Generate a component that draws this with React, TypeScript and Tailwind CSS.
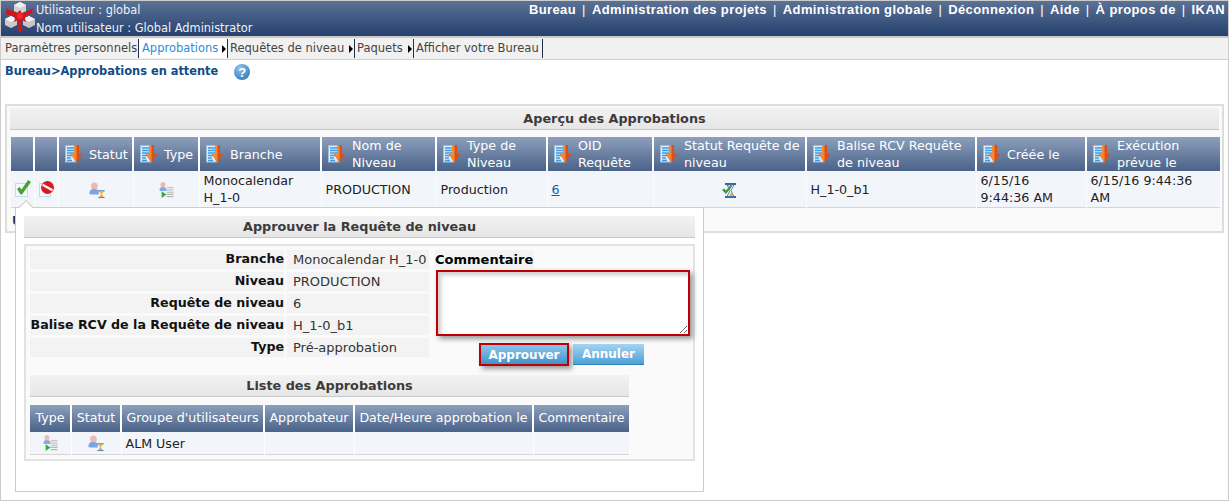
const sans = "font-['DejaVu_Sans',sans-serif]";

function Logo() {
  return (
    <svg width="30" height="33" viewBox="0 0 30 33" className="shrink-0">
      {/* cubes */}
      <path d="M15 1l6 3v6l-6 3-6-3V4z" fill="#d4d0d0" />
      <path d="M15 1l6 3-6 3-6-3z" fill="#f2f0f0" />
      <path d="M6 15l6 3v6l-6 3-6-3v-6z" fill="#cfcaca" />
      <path d="M6 15l6 3-6 3-6-3z" fill="#f4f2f2" />
      <path d="M24 15l6 3v6l-6 3-6-3v-6z" fill="#c8c4c4" />
      <path d="M24 15l6 3-6 3-6-3z" fill="#efeded" />
      {/* star */}
      <path d="M15 9l2 3.500L29 7l-2 3 1 2-8 3 0 3 1 3-4-2-1 8 2 0-3 5-3-5 2 0-1-8-4 2 1-3-1-3-9-2 2-3-1-3 11 5z" fill="#d3141b" />
      <circle cx="15" cy="15" r="3" fill="#f02a2a" />
    </svg>
  );
}

function SortIcon() {
  return (
    <svg width="17" height="18" viewBox="0 0 17 18" className="shrink-0">
      <rect x="0.500" y="0.500" width="10" height="16.500" fill="#dcecf9" stroke="#a5bdd2" />
      <path d="M2 3h7M2 5.500h7M2 8h7M2 10.500h5M2 13h4M2 15.500h5" stroke="#3f9ae3" strokeWidth="1.300" />
      <path d="M9 0h5v9h3l-5.500 9L6 9h3z" fill="#dc4f18" />
      <path d="M9 0h2.500v18L6 9h3z" fill="#f08a38" />
    </svg>
  );
}

function UserHourglass() {
  return (
    <svg width="17" height="16" viewBox="0 0 18 18">
      <ellipse cx="5.500" cy="4.500" rx="3.800" ry="4" fill="#efb9ae" />
      <path d="M0 13c0-3.500 1.500-5 5.500-5 3.500 0 5 1.200 5 3v3H1.500C.5 14 0 13.800 0 13z" fill="#7ba4e4" />
      <path d="M10 10h7M10 17.500h7" stroke="#4e86ba" strokeWidth="1.300" />
      <path d="M11 10.500h5l-2 3 2 3.500h-5l2-3.500z" fill="#f5b02e" />
    </svg>
  );
}

function UserList() {
  return (
    <svg width="15" height="16" viewBox="0 0 16 18">
      <ellipse cx="4" cy="3" rx="2.800" ry="3" fill="#efb9ae" />
      <path d="M0 9c0-2.500 1.500-3.500 4-3.500S8 6.500 8 9v1H1z" fill="#86abe2" />
      <path d="M8 6.500h8M8 9h8M8 11.500h8M8 14h8M8 16.500h8" stroke="#b5b9b9" strokeWidth="1.300" />
      <path d="M2.500 10.500l5.500 3.500-5.500 4z" fill="#2fae3a" />
    </svg>
  );
}

function CheckDoc() {
  return (
    <svg width="16" height="17" viewBox="0 0 16 17">
      <rect x="0.500" y="3.500" width="12" height="13" fill="#f5fafe" stroke="#c3dcec" />
      <path d="M2 9l2.500-2L6.500 9.500 13 0l3 2L7 14.500H5.500z" fill="#4ba233" />
    </svg>
  );
}

function RejectDoc() {
  return (
    <svg width="16" height="16" viewBox="0 0 16 16">
      <rect x="0.500" y="2.500" width="11" height="13" fill="#f5fafe" stroke="#c3dcec" />
      <circle cx="8.500" cy="6.500" r="6.500" fill="#d51b23" />
      <path d="M3.500 3.800l10 5.400" stroke="#fff" strokeWidth="2.200" />
    </svg>
  );
}

function RequestStatus() {
  return (
    <svg width="15" height="15" viewBox="0 0 15 15">
      <path d="M3 1h11M3 14h11" stroke="#2f6aa8" strokeWidth="1.800" />
      <path d="M5 2h7l-3 5.500 3 6H5l3-6z" fill="#eef3f8" stroke="#3b6ea5" strokeWidth="0.800" />
      <path d="M7 13l2.500-4.500 2 4.500z" fill="#f0a93a" />
      <path d="M0 7l2-1.500 2 2L8.500 2 10 3.500 4 11z" fill="#3c9a3c" />
    </svg>
  );
}

function HelpIcon() {
  return (
    <div className="flex h-4 w-4 items-center justify-center rounded-full bg-[radial-gradient(circle_at_35%_25%,#8cc4ee,#1d6db5)] font-['Liberation_Sans',sans-serif] text-[13px] leading-none font-bold text-white">
      ?
    </div>
  );
}

function TitleBar({ children, className }: { children: string; className: string }) {
  return (
    <div className={`flex items-center justify-center border-b border-[#c8c8c8] bg-gradient-to-b from-[#f2f2f2] to-[#e6e6e6] text-[12.800px] font-bold text-[#3b3b3b] ${className}`}>
      {children}
    </div>
  );
}

const navItems = ["Bureau", "Administration des projets", "Administration globale", "Déconnexion", "Aide", "À propos de"];

const tabs = [
  { label: "Paramètres personnels", w: "w-[138px] pl-[4px]" },
  { label: "Approbations", w: "w-[89px] pl-[3px]", active: true, arrow: true },
  { label: "Requêtes de niveau", w: "w-[127px] pl-[2px]", arrow: true },
  { label: "Paquets", w: "w-[59px] pl-[2px]", arrow: true },
  { label: "Afficher votre Bureau", w: "w-[129px] pl-[2px]" },
];

const mainCols: { w: string; label?: string }[] = [
  { w: "w-[23px]" },
  { w: "w-[24px]" },
  { w: "w-[75px]", label: "Statut" },
  { w: "w-[66px]", label: "Type" },
  { w: "w-[122px]", label: "Branche" },
  { w: "w-[115px]", label: "Nom de Niveau" },
  { w: "w-[111px]", label: "Type de Niveau" },
  { w: "w-[106px]", label: "OID Requête" },
  { w: "w-[153px]", label: "Statut Requête de niveau" },
  { w: "w-[170px]", label: "Balise RCV Requête de niveau" },
  { w: "w-[110px]", label: "Créée le" },
  { w: "w-[134px]", label: "Exécution prévue le" },
];

const formRows = [
  ["Branche", "Monocalendar H_1-0"],
  ["Niveau", "PRODUCTION"],
  ["Requête de niveau", "6"],
  ["Balise RCV de la Requête de niveau", "H_1-0_b1"],
  ["Type", "Pré-approbation"],
];

const listCols = [
  { w: "w-[41px]", label: "Type" },
  { w: "w-[50px]", label: "Statut" },
  { w: "w-[143px]", label: "Groupe d'utilisateurs" },
  { w: "w-[90px]", label: "Approbateur" },
  { w: "w-[179px]", label: "Date/Heure approbation le" },
  { w: "w-[96px]", label: "Commentaire" },
];

const headCell = "border-r-2 border-white bg-gradient-to-b from-[#8d9fbc] to-[#4a6389] text-white font-normal last:border-r-0";
const bodyCell = "border-r border-[#fafcfe] bg-[#f2f6fb] text-[#222]";

export default function App() {
  return (
    <div className={`flex h-[501px] w-[1229px] flex-col overflow-hidden border border-[#cccccc] bg-white text-[12px] ${sans}`}>
      {/* Top bar */}
      <header className="box-content flex h-[35px] shrink-0 justify-between border-b-2 border-[#c9c9c9] bg-gradient-to-b from-[#5b7295] to-[#26416f] pr-[3px] text-white">
        <div className="flex gap-[1px] pl-[4px]">
          <Logo />
          <div className="text-[11.400px] leading-[18px] text-[#eef2f7]">
            <div>Utilisateur : global</div>
            <div>Nom utilisateur : Global Administrator</div>
          </div>
        </div>
        <nav className="flex font-['Liberation_Sans',sans-serif] text-[13px] leading-[18px] font-bold tracking-[0.4px]">
          {navItems.map((item) => (
            <span key={item} className="flex">
              {item}
              <span className="mx-[6px] font-normal">|</span>
            </span>
          ))}
          <span>IKAN</span>
        </nav>
      </header>

      {/* Tabs */}
      <div className="box-content flex h-[21px] shrink-0 border-b border-[#cfcfcf] bg-[#f1f1f1] text-[11.500px] leading-[19px] text-[#444]">
        {tabs.map((t) => (
          <div
            key={t.label}
            className={`my-[1px] flex items-center justify-between border-r border-[#222f45] pr-[1px] ${t.w} ${t.active ? "bg-white text-[#2a8fd6]" : ""}`}
          >
            <span className="whitespace-nowrap">{t.label}</span>
            {t.arrow && <span className="h-0 w-0 border-y-[4px] border-l-[4px] border-y-transparent border-l-black" />}
          </div>
        ))}
      </div>

      {/* Breadcrumb */}
      <div className="flex h-[24px] shrink-0 items-center gap-[16px] pl-[4px] text-[11.400px] font-bold text-[#0f4d86]">
        <span>Bureau&gt;Approbations en attente</span>
        <HelpIcon />
      </div>

      {/* Overview panel */}
      <section className="relative mx-[4px] mt-[20px] h-[129px] shrink-0 border-2 border-[#dddddd] bg-[#fafafa] px-[3px] pt-[2px]">
        <TitleBar className="h-[22px]">Aperçu des Approbations</TitleBar>
        <table className="mt-[7px] ml-[1px] w-[1209px] table-fixed border-collapse text-[12.700px] leading-[17px]">
          <thead>
            <tr className="h-[34px]">
              {mainCols.map((c, i) => (
                <th key={i} className={`${headCell} ${c.w} p-0`}>
                  {c.label && (
                    <div className="flex items-center gap-[7px] pl-[6px] text-left">
                      <SortIcon />
                      <span>{c.label}</span>
                    </div>
                  )}
                </th>
              ))}
            </tr>
          </thead>
          <tbody>
            <tr className="h-[36px] border-b border-[#d5d5d5]">
              <td className={`${bodyCell} pl-[4px]`}><CheckDoc /></td>
              <td className={`${bodyCell} pl-[4px]`}><RejectDoc /></td>
              <td className={`${bodyCell} pt-[3px] pl-[3px]`}><div className="flex justify-center"><UserHourglass /></div></td>
              <td className={`${bodyCell} pt-[3px]`}><div className="flex justify-center"><UserList /></div></td>
              <td className={`${bodyCell} px-[4px]`}>Monocalendar H_1-0</td>
              <td className={`${bodyCell} px-[4px] pt-[2px]`}>PRODUCTION</td>
              <td className={`${bodyCell} px-[4px] pt-[2px]`}>Production</td>
              <td className={`${bodyCell} px-[4px] pt-[2px]`}><span className="text-[#0f5f9c] underline">6</span></td>
              <td className={`${bodyCell} pt-[3px]`}><div className="flex justify-center"><RequestStatus /></div></td>
              <td className={`${bodyCell} px-[4px] pt-[2px]`}>H_1-0_b1</td>
              <td className={`${bodyCell} px-[4px]`}>6/15/16<br />9:44:36 AM</td>
              <td className={`${bodyCell} px-[4px]`}>6/15/16 9:44:36<br />AM</td>
            </tr>
          </tbody>
        </table>
        <p className="mt-[5px] pl-[2px] text-[12px] leading-[17px] font-bold text-[#1a3560]">Utilisateur</p>

        {/* Approval popup */}
        <div className="absolute top-[101px] left-[8px] z-10 h-[285px] w-[689px] border border-[#cccccc] bg-white px-[8px] pt-[8px]">
          <span className="absolute -top-[6px] left-[5px] h-[10px] w-[10px] rotate-45 border-t border-l border-[#cccccc] bg-white" />
          <TitleBar className="h-[22px]">Approuver la Requête de niveau</TitleBar>
          <div className="mt-[6px] h-[217px] border-2 border-[#e2e2e2] bg-[#fafafa] px-[4px] pt-[4px]">
            <div className="flex h-[107px]">
              <div className="flex w-[399px] flex-col gap-[3px]">
                {formRows.map(([label, value]) => (
                  <div key={label} className="flex h-[19px] gap-[3px]">
                    <span className="flex w-[254px] items-center justify-end bg-[#f3f3f3] text-[12.650px] font-bold whitespace-nowrap text-[#111]">{label}</span>
                    <span className="flex w-[142px] items-center bg-[#f3f3f3] pl-[6px] text-[13px] whitespace-nowrap text-[#333]">{value}</span>
                  </div>
                ))}
              </div>
              <div className="ml-[6px] flex w-[256px] flex-col">
                <span className="flex h-[19px] w-[99px] items-center bg-[#f3f3f3] text-[13px] font-bold whitespace-nowrap text-black">Commentaire</span>
                <textarea className="mt-[1px] ml-[1px] h-[66px] w-[254px] shrink-0 border-2 border-[#c00000] bg-white shadow-[3px_3px_5px_#999,inset_3px_3px_4px_#ccc]" />
                <div className="mt-[7px] ml-[44px] flex items-center gap-[4px] text-[12px] font-bold text-white">
                  <button className="h-[23px] w-[90px] shrink-0 border-2 border-[#c00000] bg-gradient-to-b from-[#8cc6ea] to-[#3d93cc] shadow-[3px_3px_5px_#999]">Approuver</button>
                  <button className="h-[21px] w-[71px] shrink-0 border-b border-[#2e86c0] bg-gradient-to-b from-[#a5d4f0] to-[#4ba0d6]">Annuler</button>
                </div>
              </div>
            </div>
            <TitleBar className="mt-[18px] h-[22px] w-[599px]">Liste des Approbations</TitleBar>
            <table className="mt-[8px] w-[599px] table-fixed border-collapse text-[12.650px]">
              <thead>
                <tr className="h-[27px]">
                  {listCols.map((c) => (
                    <th key={c.label} className={`${headCell} ${c.w} overflow-hidden p-0 whitespace-nowrap`}>{c.label}</th>
                  ))}
                </tr>
              </thead>
              <tbody>
                <tr className="h-[22px] border-b border-[#d5d5d5]">
                  <td className={bodyCell}><div className="flex justify-center"><UserList /></div></td>
                  <td className={bodyCell}><div className="flex justify-center"><UserHourglass /></div></td>
                  <td className={`${bodyCell} px-[4px] pt-[3px]`}>ALM User</td>
                  <td className={bodyCell} />
                  <td className={bodyCell} />
                  <td className={bodyCell} />
                </tr>
              </tbody>
            </table>
          </div>
        </div>
      </section>
    </div>
  );
}
